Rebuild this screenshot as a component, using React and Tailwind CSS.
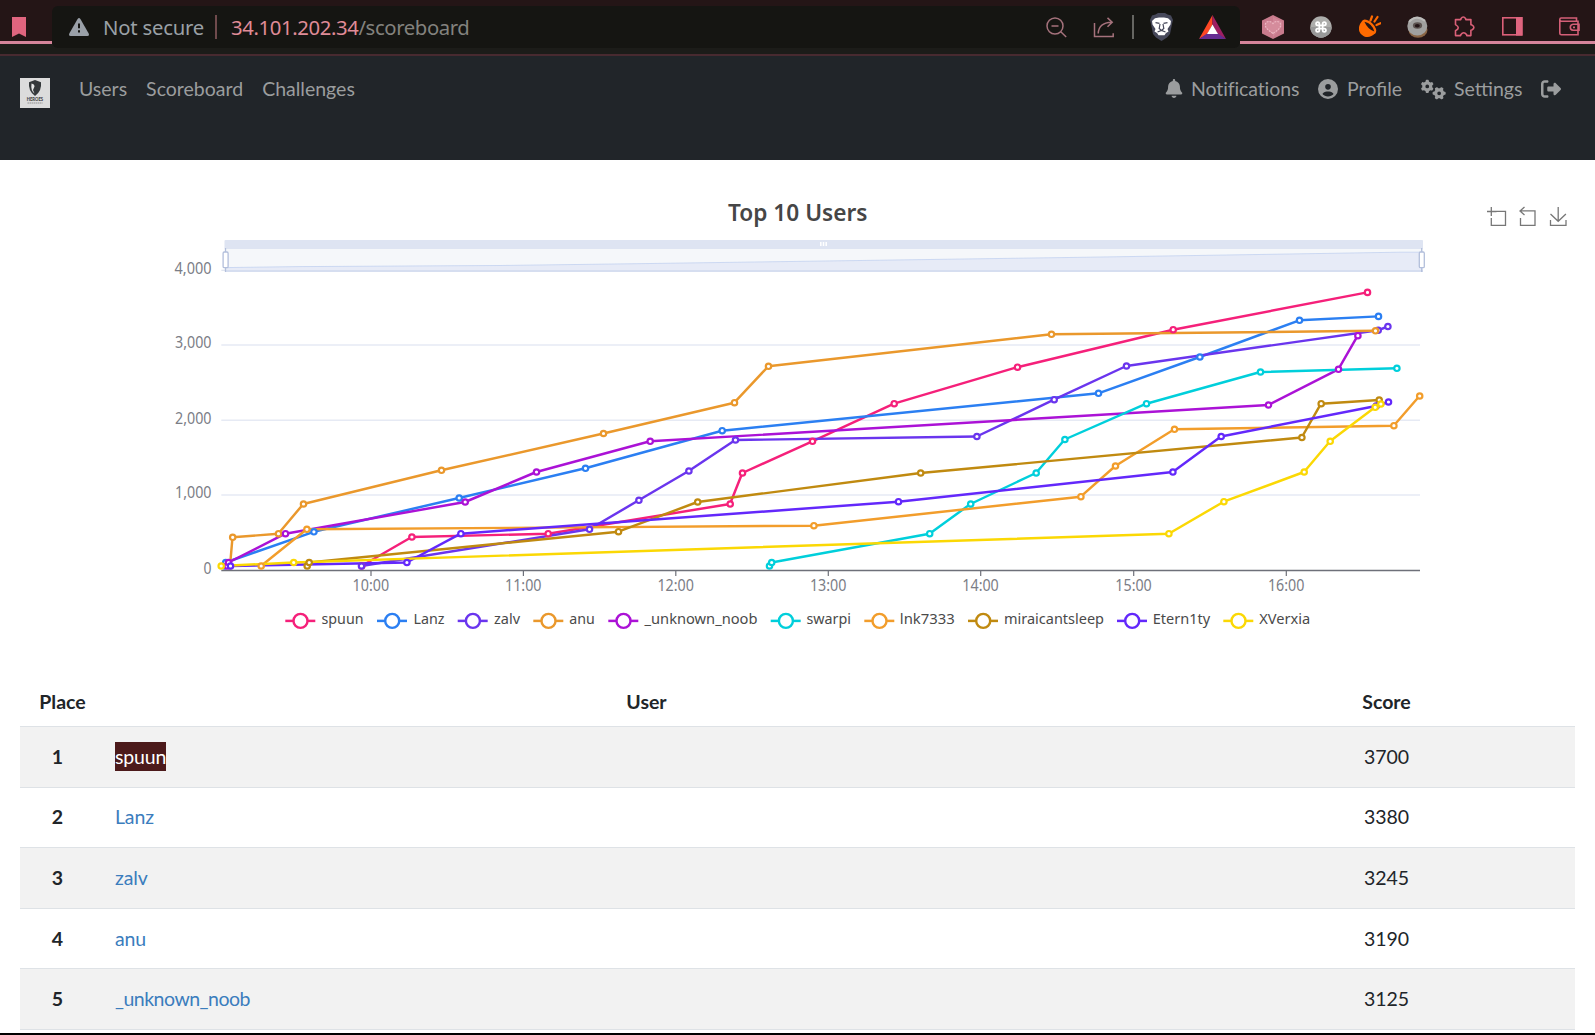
import React from "react";
import { FaBell, FaCircleUser, FaGears, FaRightFromBracket } from "react-icons/fa6";

const SERIES = [
  { name: "spuun", color: "#f5207a", lx: 300.3, tx: 321.5, w: 42, pts: [[361.5, 566], [411.7, 537], [548, 533.7], [730, 504], [742.3, 473], [812.3, 441.3], [894, 403.7], [1017.3, 367.2], [1173, 329.7], [1367.3, 292.4]] },
  { name: "Lanz", color: "#2b7ff2", lx: 392, tx: 413.5, w: 31, pts: [[224.5, 566], [225.5, 562.5], [313.7, 531.8], [459, 498], [585.3, 468.3], [722, 430.7], [1098.3, 393.3], [1199.7, 357], [1299.3, 320.3], [1378.3, 316.4]] },
  { name: "zalv", color: "#6a35ee", lx: 472.7, tx: 494, w: 26, pts: [[361.3, 566], [589.3, 529.3], [638.7, 500.3], [688.7, 471], [735.3, 440], [976.7, 436.5], [1054, 399.7], [1126.3, 366], [1378, 330.3], [1387.7, 326.5]] },
  { name: "anu", color: "#ea982c", lx: 548.3, tx: 569.3, w: 25.5, pts: [[230, 566], [232.5, 537.3], [278.3, 533.7], [303.3, 504], [441.3, 470.3], [603.3, 433.5], [734.3, 402.7], [768.3, 366.3], [1051.3, 334.3], [1375.3, 330.8]] },
  { name: "_unknown_noob", color: "#ab12d6", lx: 623.3, tx: 644.5, w: 113, pts: [[227, 566], [228.3, 562.5], [285.3, 533.7], [465, 502], [536.3, 472], [650, 441.3], [1268.3, 405], [1338.3, 369.3], [1357.7, 335.7]] },
  { name: "swarpi", color: "#00cfdb", lx: 785.7, tx: 806.5, w: 44.5, pts: [[769.3, 566], [771.5, 562.5], [929.5, 533.7], [970.5, 504], [1036, 473], [1064.7, 439.5], [1146.3, 403.7], [1260.3, 372], [1396.7, 368.3]] },
  { name: "lnk7333", color: "#f29d2b", lx: 879.3, tx: 899.8, w: 55, pts: [[261, 566], [306.7, 529.3], [813.7, 525.7], [1080.7, 496.7], [1115.3, 466], [1174.3, 429.3], [1393.7, 425.7], [1419.5, 396]] },
  { name: "miraicantsleep", color: "#c08a10", lx: 983, tx: 1004, w: 100, pts: [[307, 566], [309, 562.5], [618.3, 531.7], [697.5, 502], [920.5, 473], [1301.7, 437.5], [1321, 403.7], [1379, 400]] },
  { name: "Etern1ty", color: "#6328fb", lx: 1132, tx: 1152.7, w: 57.5, pts: [[230.3, 566], [406.7, 562.5], [460.7, 533.7], [898.3, 501.7], [1172.7, 472], [1221, 436.5], [1376, 406], [1388.3, 402]] },
  { name: "XVerxia", color: "#fbd804", lx: 1238.3, tx: 1259.3, w: 51, pts: [[221, 566], [293.5, 562.5], [1168.7, 533.7], [1223.7, 501.7], [1304, 472], [1330, 441.3], [1375, 407.3], [1380.7, 404]] },
];

const GRID = [
  { label: "3,000", y: 345, w: 36.5 },
  { label: "2,000", y: 420.3, w: 36.5 },
  { label: "1,000", y: 495, w: 36.5 },
];
const HOURS = [["10:00", 371], ["11:00", 523.4], ["12:00", 675.8], ["13:00", 828.3], ["14:00", 980.7], ["15:00", 1133.7], ["16:00", 1286.3]];
const ROWS = [["1", "spuun", "3700"], ["2", "Lanz", "3380"], ["3", "zalv", "3245"], ["4", "anu", "3190"], ["5", "_unknown_noob", "3125"]];

function AddressBar() {
  return (
    <div className="mt-1.5 flex h-[42px] w-[1188px] shrink-0 items-center rounded-[6px] bg-[#151512] pl-[17px] font-['Noto_Sans'] text-[20.3px] leading-none">
      <svg width="20" height="18" viewBox="0 0 20 18">
        <path d="M8.6 1Q10-1 11.4 1L19.7 15.6Q20.6 18 18.4 18H1.6Q-.6 18 .3 15.6Z" fill="#9aa0a8" />
        <path d="M10 5.5v4.8M10 12.2v2.3" stroke="#151512" strokeWidth="2" />
      </svg>
      <span className="ml-[14px] w-[112px] whitespace-nowrap tracking-[-0.2px] text-[#9aa0a6]">Not secure</span>
      <span className="h-6 w-0.5 bg-[#6f4a4c]" />
      <span className="ml-[14px] whitespace-nowrap tracking-[-0.38px] text-[#83827e]">
        <span className="text-[#e08c98]">34.101.202.34</span>/scoreboard
      </span>
      <div className="ml-auto flex items-center pr-[14px]">
        <svg width="21" height="21" viewBox="0 0 21 21" fill="none" stroke="#a5727c" strokeWidth="1.5">
          <circle cx="9" cy="9" r="8" /><path d="M5.5 9h7M14.8 14.8l5.4 5.2" />
        </svg>
        <svg className="ml-[26px]" width="22" height="21" viewBox="0 0 22 21" fill="none" stroke="#a5727c" strokeWidth="1.5">
          <path d="M1.5 6v13.5h18.7v-3.3M5.2 16.5C5.5 9.5 10 5.5 18.5 5.2M14.5.9 19.2 5.2l-4.7 4.6" />
        </svg>
        <span className="ml-[17px] h-6 w-0.5 bg-[#666662]" />
        <svg className="ml-4" width="23" height="28" viewBox="0 0 23 28">
          <path d="M5.5 1.5 8 0h7l2.500 1.500 3.500 1L23 7l-1 4-2 10-3 3.500-5.500 3.500L6 24.500 3 21 1 11 0 7l2-4.500z" fill="#46485a" />
          <path d="M5 5.200 9 4.500h5l4 .7L21 8l-.5 3.500L17.500 16l1 2.500-2.500 1.500-1.500 2.300h-6L7 20l-2.500-1.500 1-2.500L2.500 11.500 2 8z" fill="#fff" />
          <path d="M5.500 9.600l4 .8M17.500 9.600l-4 .8M10 11l-.8 4.500 2.300 2 2.300-2L13 11M7.500 19l4-1.500 4 1.500" fill="none" stroke="#46485a" strokeWidth="1.200" />
        </svg>
        <svg className="ml-[26px]" width="27" height="24" viewBox="0 0 27 24">
          <path d="M13.500 0 0 24l8-4.500 5.500-10z" fill="#ff4724" />
          <path d="M13.500 0 27 24l-8-4.500-5.500-10z" fill="#9e1f63" />
          <path d="M0 24h27l-8-5.500H8z" fill="#662d91" />
          <path d="M13.500 9.500 8 19h11z" fill="#fff" />
        </svg>
      </div>
    </div>
  );
}

function Extensions() {
  return (
    <div className="flex h-11 flex-1 items-center border-b-[3px] border-[#d5849a] pl-[22px] pt-3">
      <svg width="22" height="24" viewBox="0 0 22 24">
        <path d="M11 0 22 5.500v13L11 24 0 18.500v-13z" fill="#c97b8d" />
        <path d="M11 2 20 6.500v5L11 22z" fill="#d58c9c" opacity=".7" />
        <path d="M11 18.500C5 14.500 2.800 12 3.400 9 4.300 6 8.500 5.500 11 8.600 13.500 5.500 17.700 6 18.600 9c.6 3-1.600 5.500-7.600 9.500z" fill="#d58c9c" stroke="#edb9c4" strokeWidth="1.100" strokeDasharray="2 1" />
      </svg>
      <svg className="ml-[26px]" width="22" height="22" viewBox="0 0 22 22">
        <circle cx="11" cy="11" r="10.700" fill="#adadab" /><path d="M.3 11a10.700 10.700 0 0 0 21.400 0z" fill="#999" />
        <path transform="translate(4.400 4.400) scale(.55)" d="M15 6v12a3 3 0 1 0 3-3H6a3 3 0 1 0 3 3V6a3 3 0 1 0-3 3h12a3 3 0 1 0-3-3" fill="none" stroke="#fff" strokeWidth="3.200" />
      </svg>
      <svg className="ml-[27px]" width="22" height="23" viewBox="0 0 22 23">
        <g transform="rotate(45 8.500 13.500)">
          <ellipse cx="8.500" cy="11" rx="9" ry="4.500" fill="#ff6a00" />
          <path d="M-.5 11C-.5 19 4 22 8.500 22s9-3 9-11z" fill="#ff6a00" />
          <path d="M1.500 10.800Q8.500 6.500 15.500 10.800 8.500 13.800 1.500 10.800z" fill="#241516" />
        </g>
        <path d="M11.500 5.500l1.500-4M15.500 6.500l3-4.500M17.500 10l4-1.800" stroke="#ff6a00" strokeWidth="2.200" strokeLinecap="round" />
      </svg>
      <svg className="ml-[26px]" width="21" height="22" viewBox="0 0 21 22">
        <ellipse cx="11" cy="14" rx="9.500" ry="7.800" fill="#8a6545" />
        <ellipse cx="10.300" cy="10" rx="10" ry="9.600" fill="#a0a09f" />
        <path d="M2 6Q9-2 18 5" fill="none" stroke="#bcbcba" strokeWidth="2" />
        <ellipse cx="10.500" cy="9.500" rx="4.600" ry="3.200" fill="#5c5350" /><ellipse cx="10.300" cy="9.800" rx="2.500" ry="1.700" fill="#241516" />
      </svg>
      <svg className="ml-[26px]" width="22" height="21" viewBox="0 0 22 21" fill="none" stroke="#da6078" strokeWidth="1.600" strokeLinejoin="round">
        <path d="M1.500 3.600h5.400V2.800Q9.300-.9 11.700 2.800v.8h5.200v5.200l.9.100Q22 11.500 17.800 14l-.9.200v5.400h-4.200v-.8q-3-4-6 0v.8H1.500v-4.800q5.600-3 0-6.200z" />
      </svg>
      <svg className="ml-[26px]" width="21" height="19" viewBox="0 0 21 19">
        <rect x=".8" y=".8" width="19" height="17" fill="none" stroke="#dc6079" strokeWidth="1.600" /><rect x="14" y="0" width="6.500" height="18.600" fill="#e0657f" />
      </svg>
      <svg className="ml-[36px] shrink-0" width="21" height="19" viewBox="0 0 21 19" fill="none" stroke="#d45f77" strokeWidth="1.600">
        <path d="M17.500 4V1H2.200Q.8 1 .8 2.500v13.700q0 1.600 1.600 1.600H19V4.300H2.500Q.8 4 .8 2.500M20 7.300h-6q-2.700.3-2.700 3t2.700 3h6zM14 10.400h2" />
      </svg>
    </div>
  );
}

function BrowserBar() {
  return (
    <div className="h-14 border-b-2 border-[#482a30] bg-[#1c1c19]">
      <div className="flex h-[44px] bg-[#241516]">
        <div className="flex h-11 w-[52px] shrink-0 border-b-[3px] border-[#d5849a] pl-3 pt-[17px]">
          <svg width="14" height="20" viewBox="0 0 14 20"><path d="M0 0h14v20l-7-3.500L0 20z" fill="#e0657f" /></svg>
        </div>
        <AddressBar />
        <Extensions />
      </div>
    </div>
  );
}

function Navbar() {
  return (
    <nav className="flex h-[104px] bg-[#212529] px-5 pt-[18px] font-['Lato'] text-[19.5px] leading-[30px] text-[#9b9d9e]">
      <svg className="mt-1" width="30" height="30" viewBox="0 0 30 30">
        <rect width="30" height="30" fill="#dcdcdc" />
        <path d="M15 2 9 4.300q-1 9 6 13.700 7-4.700 6-13.700z" fill="#34383a" />
        <path d="M11.500 5.500q3 .5 3 3L13 12l1.500 3.500q-4-3-3-10z" fill="#e6e6e6" />
        <text x="6.700" y="22.900" fontSize="4.600" fontWeight="900" fill="#444" textLength="16.500" lengthAdjust="spacingAndGlyphs">HEROES</text>
        <path d="M7.500 25h15" stroke="#aaa" strokeWidth="1.500" strokeDasharray="1.500 .5" />
      </svg>
      <div className="ml-[29px] flex gap-[19px] whitespace-nowrap">
        <span>Users</span><span>Scoreboard</span><span>Challenges</span>
      </div>
      <div className="ml-auto mr-[14px] flex whitespace-nowrap">
        <span className="flex w-[153px] gap-[8px] tracking-[-0.1px]"><FaBell size={19} className="mt-[5px] w-[18px] shrink-0" />Notifications</span>
        <span className="flex w-[103px] gap-[9px]"><FaCircleUser size={20} className="mt-[5px] shrink-0" />Profile</span>
        <span className="flex w-[120px] gap-[8px]"><FaGears size={25} className="mt-[3px] shrink-0" />Settings</span>
        <FaRightFromBracket size={20} className="mt-[5px]" />
      </div>
    </nav>
  );
}

function Chart() {
  return (
    <svg className="block shrink-0" width="1595" height="510" viewBox="0 160 1595 510" fontFamily="'Noto Sans', 'Open Sans', sans-serif">
      <text x="728" y="220.500" fontSize="22.500" fontWeight="600" fill="#464646" textLength="139.500" lengthAdjust="spacingAndGlyphs">Top 10 Users</text>
      <g fill="none" stroke="#777" strokeWidth="1.300">
        <path d="M1491.300 207v9M1487 211.500h9.500M1491.300 218v7.300h14.200v-13.900h-9" />
        <path d="M1520.500 218v7.300h14.500v-14.400h-14M1524.500 207l-4.500 4 4.500 4" />
        <path d="M1550.500 220v5.300h15.500V220M1558.200 207v14M1550.500 214l7.700 7.300 7.700-7.300" />
      </g>
      <g fontSize="15.500" fill="#7b7d86">
        <text x="174.500" y="274" textLength="37" lengthAdjust="spacingAndGlyphs">4,000</text>
        {GRID.map((g) => (
          <g key={g.label}>
            <path d={`M221.300 ${g.y}H1420`} stroke="#e6eaf4" strokeWidth="1.400" />
            <text x="175" y={g.y + 3.300} textLength={g.w} lengthAdjust="spacingAndGlyphs">{g.label}</text>
          </g>
        ))}
        <text x="203.500" y="574" textLength="8" lengthAdjust="spacingAndGlyphs">0</text>
        {HOURS.map(([t, x]) => (
          <g key={t}>
            <path d={`M${x} 571v5`} stroke="#6e7079" strokeWidth="1.200" />
            <text x={x - 18.400} y="590.700" textLength="36.500" lengthAdjust="spacingAndGlyphs">{t}</text>
          </g>
        ))}
      </g>
      <path d="M221.300 570.500H1420" stroke="#6e7079" strokeWidth="1.300" />
      <path d="M221.300 270.300h4" stroke="#dfe4f0" strokeWidth="1.300" />
      <rect x="225" y="240" width="1198" height="32" fill="#f5f7fa" />
      <rect x="224.500" y="240" width="1198.500" height="9" rx="1" fill="#dee4f2" />
      <path d="M225 267.600 300 266.600 500 265.500 630 263.800 860 260.500 1090 257.200 1290 254 1400 252.200H1423V271H225z" fill="#e7ebf7" />
      <path d="M225 267.600 300 266.600 500 265.500 630 263.800 860 260.500 1090 257.200 1290 254 1400 252.200H1423" fill="none" stroke="#c3d2f0" strokeWidth=".8" />
      <path d="M225 271H1423" stroke="#d6def0" strokeWidth="1.800" />
      <path d="M820.800 242v4M823.500 242v4M826.200 242v4" stroke="#fff" strokeWidth="1.500" />
      <g fill="#fff" stroke="#b3bfdb" strokeWidth="1.300">
        <path d="M225.500 248v24M1421.700 248v24" />
        <rect x="223.100" y="252" width="5" height="15.700" rx="1.200" />
        <rect x="1419.300" y="252" width="5" height="15.700" rx="1.200" />
      </g>
      {SERIES.map((s) => (
        <polyline key={s.name} points={s.pts.join(" ")} fill="none" stroke={s.color} strokeWidth="2.450" strokeLinejoin="bevel" />
      ))}
      {SERIES.map((s) => (
        <g key={s.name} fill="#fff" stroke={s.color}>
          {s.pts.map(([x, y], i) => <circle key={i} cx={x + 0.2} cy={y} r="2.700" strokeWidth="2.200" />)}
          <path d={`M${s.lx - 15} 620.900h30`} strokeWidth="2.500" />
          <circle cx={s.lx + 0.2} cy="620.900" r="7" strokeWidth="2.400" />
        </g>
      ))}
      <g fontSize="15" fill="#4a4a4a">
        {SERIES.map((s) => (
          <text key={s.name} x={s.tx} y="624.300" textLength={s.w} lengthAdjust="spacingAndGlyphs">{s.name}</text>
        ))}
      </g>
    </svg>
  );
}

function Standings() {
  return (
    <div className="mx-5 font-['Lato'] text-[19.5px] leading-[30px] text-[#212529]">
      <div className="grid h-[56px] grid-cols-[75px_1103px_377px] pt-[17px] text-center font-bold">
        <span className="pl-[10px]">Place</span><span>User</span><span>Score</span>
      </div>
      {ROWS.map(([place, name, score], i) => (
        <div key={place} className="grid h-[60.600px] grid-cols-[75px_1103px_377px] items-center border-t border-[#dee2e6] text-center odd:bg-white even:bg-[#f2f2f2]">
          <span className="font-bold">{place}</span>
          <span className={name.startsWith("_") ? "pl-5 text-left tracking-[-0.5px] text-[#3b7dbd]" : "pl-5 text-left tracking-[-0.15px] text-[#3b7dbd]"}>
            {i === 0 ? <span className="inline-block h-[29px] bg-[#4c1a1b] leading-[29px] text-white">{name}</span> : name}
          </span>
          <span>{score}</span>
        </div>
      ))}
      <div className="h-[4px] border-t border-[#dee2e6]" />
    </div>
  );
}

export default function App() {
  return (
    <div className="flex h-[1035px] w-[1595px] flex-col overflow-hidden border-b-2 border-black bg-white">
      <BrowserBar />
      <Navbar />
      <Chart />
      <Standings />
    </div>
  );
}
